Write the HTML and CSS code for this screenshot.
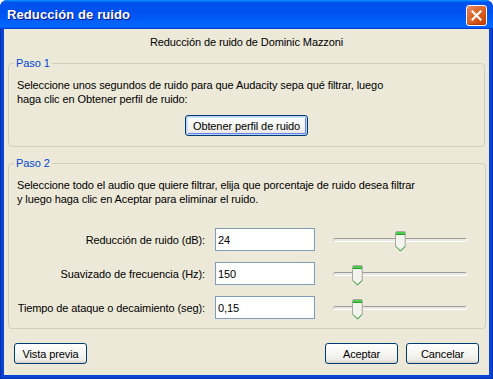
FILE: index.html
```html
<!DOCTYPE html>
<html lang="es">
<head>
    <meta charset="UTF-8">
    <title>Reducción de ruido</title>
    <link rel="stylesheet" href="styles.css">
</head>
<body>

<div class="window">
    <!-- Barra de título -->
    <div class="titlebar">
        <span class="title">Reducción de ruido</span>
        <button class="close" aria-label="Cerrar">
            <svg width="11" height="11" viewBox="0 0 11 11">
                <path d="M1.5 1.5 L9.5 9.5 M9.5 1.5 L1.5 9.5" stroke="#fff" stroke-width="2.2" stroke-linecap="square"/>
            </svg>
        </button>
    </div>

    <div class="client">
        <p class="header">Reducción de ruido de Dominic Mazzoni</p>

        <!-- Paso 1 -->
        <fieldset class="group">
            <legend>Paso 1</legend>
            <p class="desc">Seleccione unos segundos de ruido para que Audacity sepa qué filtrar, luego<br>haga clic en Obtener perfil de ruido:</p>
            <div class="center">
                <button class="btn default profile">Obtener perfil de ruido</button>
            </div>
        </fieldset>

        <!-- Paso 2 -->
        <fieldset class="group">
            <legend>Paso 2</legend>
            <p class="desc">Seleccione todo el audio que quiere filtrar, elija que porcentaje de ruido desea filtrar<br>y luego haga clic en Aceptar para eliminar el ruido.</p>

            <div class="params">
                <label>Reducción de ruido (dB):</label>
                <input type="text" class="field" value="24">
                <div class="slider">
                    <div class="track"></div>
                    <svg class="thumb" style="left: 62px" width="11" height="21" viewBox="0 0 11 21">
                        <path d="M0.5 2 Q0.5 0.5 2 0.5 H9 Q10.5 0.5 10.5 2 V15.3 L5.5 20.3 L0.5 15.3 Z" fill="#f4f4ef" stroke="#a9a99f"/>
                        <path d="M10 2 V15 L5.5 19.5" fill="none" stroke="#c9c8c0"/>
                        <rect x="1" y="1" width="9" height="1.5" fill="#47d147"/>
                        <rect x="1" y="2.5" width="9" height="1.5" fill="#21a121"/>
                        <path d="M1 15.5 L5.5 20 L10 15.5" fill="none" stroke="#3ab03a"/>
                    </svg>
                </div>

                <label>Suavizado de frecuencia (Hz):</label>
                <input type="text" class="field" value="150">
                <div class="slider">
                    <div class="track"></div>
                    <svg class="thumb" style="left: 19px" width="11" height="21" viewBox="0 0 11 21">
                        <path d="M0.5 2 Q0.5 0.5 2 0.5 H9 Q10.5 0.5 10.5 2 V15.3 L5.5 20.3 L0.5 15.3 Z" fill="#f4f4ef" stroke="#a9a99f"/>
                        <path d="M10 2 V15 L5.5 19.5" fill="none" stroke="#c9c8c0"/>
                        <rect x="1" y="1" width="9" height="1.5" fill="#47d147"/>
                        <rect x="1" y="2.5" width="9" height="1.5" fill="#21a121"/>
                        <path d="M1 15.5 L5.5 20 L10 15.5" fill="none" stroke="#3ab03a"/>
                    </svg>
                </div>

                <label>Tiempo de ataque o decaimiento (seg):</label>
                <input type="text" class="field" value="0,15">
                <div class="slider">
                    <div class="track"></div>
                    <svg class="thumb" style="left: 19px" width="11" height="21" viewBox="0 0 11 21">
                        <path d="M0.5 2 Q0.5 0.5 2 0.5 H9 Q10.5 0.5 10.5 2 V15.3 L5.5 20.3 L0.5 15.3 Z" fill="#f4f4ef" stroke="#a9a99f"/>
                        <path d="M10 2 V15 L5.5 19.5" fill="none" stroke="#c9c8c0"/>
                        <rect x="1" y="1" width="9" height="1.5" fill="#47d147"/>
                        <rect x="1" y="2.5" width="9" height="1.5" fill="#21a121"/>
                        <path d="M1 15.5 L5.5 20 L10 15.5" fill="none" stroke="#3ab03a"/>
                    </svg>
                </div>
            </div>
        </fieldset>

        <!-- Botones inferiores -->
        <div class="buttons">
            <button class="btn">Vista previa</button>
            <span class="spacer"></span>
            <button class="btn">Aceptar</button>
            <button class="btn">Cancelar</button>
        </div>
    </div>
</div>

</body>
</html>
```

FILE: styles.css
```css
* {
    margin: 0;
    padding: 0;
    box-sizing: border-box;
}
body {
    font-family: 'Liberation Sans', Arial, sans-serif;
    font-size: 11px;
    letter-spacing: -0.1px;
    color: #000;
    background-color: #fff;
}
.window {
    width: 493px;
    height: 379px;
    display: flex;
    flex-direction: column;
    background-color: #0842d6;
    border-radius: 8px 8px 0 0;
    box-shadow: inset 1px 0 #0831a9, inset -1px 0 #0831a9, inset 0 -1px #0831a9;
}
.titlebar {
    height: 29px;
    display: flex;
    align-items: center;
    justify-content: space-between;
    padding: 0 6px 0 7px;
    border-radius: 7px 7px 0 0;
    background: linear-gradient(to bottom, #0997ff, #0053ee 8%, #0050ee 40%, #0066ff 88%, #0066ff 93%, #005bff 95%, #003dd7 96%, #003dd7);
}
.title {
    font-weight: bold;
    font-size: 13px;
    color: #fff;
    text-shadow: 1px 1px #0f1089;
    letter-spacing: 0.1px;
}
.close {
    width: 21px;
    height: 21px;
    border: 1px solid #fff;
    border-radius: 3px;
    display: flex;
    align-items: center;
    justify-content: center;
    margin-top: 2px;
    background: radial-gradient(circle at 85% 85%, #cc4600, #dc6527 55%, #e5805a 85%, #f0a583);
    box-shadow: inset 0 -1px 2px rgba(120, 20, 0, 0.5);
}
.client {
    flex: 1;
    margin: 0 4px 4px;
    background-color: #ece9d8;
    padding: 6px 4px 0;
    display: flex;
    flex-direction: column;
}
.header {
    text-align: center;
    line-height: 14px;
    margin-bottom: 8px;
}
.group {
    border: 1px solid #d0d0bf;
    border-radius: 4px;
    padding: 0 8px;
}
.group + .group {
    margin-top: 10px;
}
.group legend {
    color: #0046d5;
    padding: 0 2px;
    margin-left: -3px;
    line-height: 13px;
}
.desc {
    line-height: 14px;
    margin-top: 8px;
}
.center {
    display: flex;
    justify-content: center;
    margin: 9px 0 10px;
}
.btn {
    height: 21px;
    width: 73px;
    font-family: 'Liberation Sans', Arial, sans-serif;
    font-size: 11px;
    letter-spacing: -0.1px;
    color: #000;
    border: 1px solid #003c74;
    border-radius: 3px;
    background: linear-gradient(to bottom, #ffffff, #f3f3ef 60%, #ecebe6 85%, #d6d0c5);
}
.profile {
    width: 123px;
}
.default {
    box-shadow: inset 0 0 0 1px #b9d1fa, inset 1px 1px 0 1px #cee7ff, inset -1px -1px 0 1px #6982ee;
}
.params {
    display: grid;
    grid-template-columns: 188px 100px 152px;
    column-gap: 10px;
    row-gap: 11px;
    margin: 22px 0 9px;
    align-items: center;
}
.params label {
    text-align: right;
    white-space: nowrap;
}
.field {
    height: 23px;
    border: 1px solid #7f9db9;
    background-color: #fff;
    font-family: 'Liberation Sans', Arial, sans-serif;
    font-size: 11px;
    letter-spacing: -0.1px;
    padding: 0 2px;
}
.slider {
    position: relative;
    height: 23px;
    margin-left: 8px;
    width: 134px;
}
.track {
    position: absolute;
    left: 0;
    right: 0;
    top: 10px;
    height: 4px;
    border-radius: 2px;
    background-color: #e9e9e4;
    border-top: 1px solid #9d9c99;
    border-bottom: 1px solid #fff;
    border-left: 1px solid #c7c6c1;
    border-right: 1px solid #fff;
}
.thumb {
    position: absolute;
    top: 3px;
}
.buttons {
    display: flex;
    gap: 8px;
    margin-top: 14px;
    padding: 0 6px;
}
.spacer {
    flex: 1;
}
```
